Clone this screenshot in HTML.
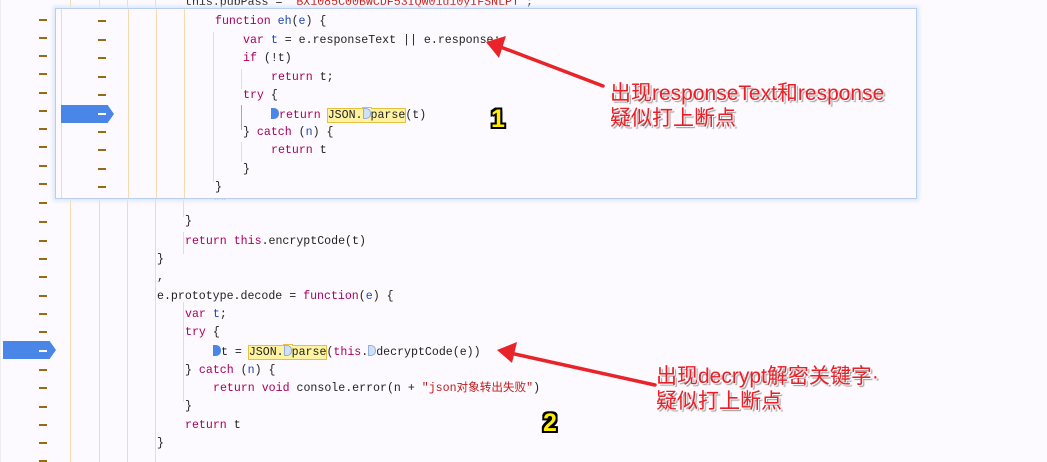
<!DOCTYPE html>
<html><head><meta charset="utf-8"><style>
body{margin:0;width:1047px;height:462px;overflow:hidden;background:#fdfaff;position:relative;font-family:"Liberation Mono","Noto Sans CJK SC",monospace;font-size:11.6px;color:#222}
.l{position:absolute;white-space:pre;line-height:14px}
.k{color:#a8005c}.b{color:#1a4aa8}.s{color:#c41a16}
.d{position:absolute;width:8px;height:1.5px;background:#9a6a10}
.v{position:absolute;width:1px;background:#fbd9b0}
.pop{position:absolute;left:55px;top:8px;width:860px;height:189px;background:#fdfaff;border:1px solid #b9cdee;box-shadow:0 0 4px 2px #dbe6f8;overflow:hidden}
.hl{background:#fff2a0;outline:1px solid #e8c040}
.bp{position:absolute;height:18px;background:#4a86e8;clip-path:polygon(0 0,88% 0,100% 50%,88% 100%,0 100%)}
.mk{display:inline-block;width:8px;height:11px;background:#4a86e8;border-radius:0 5px 5px 0;vertical-align:-1px}
.mk2{display:inline-block;width:8px;height:11px;background:#cfe0f8;border:1px solid #8fb0e0;box-sizing:border-box;border-radius:0 5px 5px 0;vertical-align:-1px}
.ann{position:absolute;color:#ee1c24;font-family:"Liberation Sans","Noto Sans CJK SC",sans-serif;font-size:21px;line-height:25px;text-shadow:1px 1px 0 #fff,2px 2px 1px #999;white-space:nowrap}
.num{position:absolute;font-family:"Liberation Sans",sans-serif;font-weight:bold;font-size:25px;color:#ffee00;text-shadow:-2px -2px 0 #000,2px -2px 0 #000,-2px 2px 0 #000,2px 2px 0 #000,0 -2px 0 #000,0 2px 0 #000,-2px 0 0 #000,2px 0 0 #000}
</style></head><body>
<div class="v" style="left:70px;top:0;height:462px"></div>
<div class="v" style="left:99px;top:0;height:462px"></div>
<div class="v" style="left:127px;top:0;height:462px"></div>
<div class="v" style="left:155px;top:0;height:462px"></div>
<div class="v" style="left:183px;top:232px;height:22px"></div>
<div class="v" style="left:183px;top:302px;height:100px"></div>
<div class="v" style="left:183px;top:197px;height:20px"></div>
<div class="v" style="left:0;top:0;height:462px;background:#eee"></div>

<div class="d" style="left:39px;top:19px"></div><div class="d" style="left:39px;top:37px"></div><div class="d" style="left:39px;top:55px"></div><div class="d" style="left:39px;top:73px"></div><div class="d" style="left:39px;top:92px"></div><div class="d" style="left:39px;top:110px"></div><div class="d" style="left:39px;top:128px"></div><div class="d" style="left:39px;top:146px"></div><div class="d" style="left:39px;top:165px"></div><div class="d" style="left:39px;top:183px"></div><div class="d" style="left:39px;top:202px"></div><div class="d" style="left:39px;top:221px"></div><div class="d" style="left:39px;top:240px"></div><div class="d" style="left:39px;top:258px"></div><div class="d" style="left:39px;top:276px"></div><div class="d" style="left:39px;top:295px"></div><div class="d" style="left:39px;top:313px"></div><div class="d" style="left:39px;top:331px"></div><div class="d" style="left:39px;top:369px"></div><div class="d" style="left:39px;top:387px"></div><div class="d" style="left:39px;top:406px"></div><div class="d" style="left:39px;top:424px"></div><div class="d" style="left:39px;top:442px"></div><div class="d" style="left:39px;top:460px"></div>
<div class="bp" style="left:3px;top:341px;width:53px"></div>
<div class="d" style="left:39px;top:350px;background:#fff"></div>

<div class="l" style="left:185px;top:-4px">this.pubPass = <span class="s">"BX1085C00BWCDF53IQW01u10yIFSNLPT"</span>;</div>
<div class="l" style="left:213px;top:196px">""</div>
<div class="l" style="left:185px;top:215px">}</div>
<div class="l" style="left:185px;top:235px"><span class="k">return</span> <span class="k">this</span>.encryptCode(t)</div>
<div class="l" style="left:157px;top:253px">}</div>
<div class="l" style="left:157px;top:271px">,</div>
<div class="l" style="left:157px;top:290px">e.prototype.decode = <span class="k">function</span>(<span class="b">e</span>) {</div>
<div class="l" style="left:185px;top:308px"><span class="k">var</span> <span class="b">t</span>;</div>
<div class="l" style="left:185px;top:326px"><span class="k">try</span> {</div>
<div class="l" style="left:213px;top:345px"><span class="mk"></span>t = <span class="hl">JSON.<span class="mk2"></span>parse</span>(<span class="k">this</span>.<span class="mk2"></span>decryptCode(e))</div>
<div class="l" style="left:185px;top:364px">} <span class="k">catch</span> (<span class="b">n</span>) {</div>
<div class="l" style="left:213px;top:382px"><span class="k">return</span> <span class="k">void</span> console.error(n + <span class="s">"json对象转出失败"</span>)</div>
<div class="l" style="left:185px;top:400px">}</div>
<div class="l" style="left:185px;top:419px"><span class="k">return</span> t</div>
<div class="l" style="left:157px;top:437px">}</div>

<div class="pop">
 <div class="v" style="left:5px;top:0;height:189px"></div>
 <div class="v" style="left:72px;top:0;height:189px"></div>
 <div class="v" style="left:100px;top:0;height:189px"></div>
 <div class="v" style="left:128px;top:0;height:189px"></div>
 <div class="v" style="left:157px;top:23px;height:150px"></div>
 <div class="v" style="left:185px;top:60px;height:20px"></div>
 <div class="v" style="left:185px;top:96px;height:25px;background:#e0a050"></div>
 <div class="v" style="left:185px;top:133px;height:20px"></div>
 <div class="bp" style="left:5px;top:96px;width:53px"></div>
 <div class="d" style="left:42px;top:11px"></div><div class="d" style="left:42px;top:30px"></div><div class="d" style="left:42px;top:48px"></div><div class="d" style="left:42px;top:67px"></div><div class="d" style="left:42px;top:85px"></div><div class="d" style="left:42px;top:104px;background:#fff"></div><div class="d" style="left:42px;top:122px"></div><div class="d" style="left:42px;top:140px"></div><div class="d" style="left:42px;top:159px"></div><div class="d" style="left:42px;top:177px"></div>
 <div class="l" style="left:159px;top:6px"><span class="k">function</span> <span class="b">eh</span>(<span class="b">e</span>) {</div>
 <div class="l" style="left:187px;top:25px"><span class="k">var</span> <span class="b">t</span> = e.responseText || e.response;</div>
 <div class="l" style="left:187px;top:43px"><span class="k">if</span> (!t)</div>
 <div class="l" style="left:215px;top:62px"><span class="k">return</span> t;</div>
 <div class="l" style="left:187px;top:80px"><span class="k">try</span> {</div>
 <div class="l" style="left:215px;top:99px"><span class="mk"></span><span class="k">return</span> <span class="hl">JSON.<span class="mk2"></span>parse</span>(t)</div>
 <div class="l" style="left:187px;top:117px">} <span class="k">catch</span> (<span class="b">n</span>) {</div>
 <div class="l" style="left:215px;top:135px"><span class="k">return</span> t</div>
 <div class="l" style="left:187px;top:154px">}</div>
 <div class="l" style="left:159px;top:172px">}</div>
</div>

<svg style="position:absolute;left:0;top:0" width="1047" height="462">
 <g stroke="#e8232a" stroke-width="3.5" fill="#e8232a" stroke-linecap="round">
  <line x1="603" y1="86" x2="498" y2="46"/>
  <polygon points="486,42 506,36 499,58" stroke="none"/>
  <line x1="655" y1="385" x2="510" y2="353"/>
  <polygon points="497,350 517,342 512,363" stroke="none"/>
 </g>
</svg>
<div class="ann" style="left:610px;top:81px">出现responseText和response<br>疑似打上断点</div>
<div class="ann" style="left:656px;top:364px">出现decrypt解密关键字·<br>疑似打上断点</div>
<div class="num" style="left:491px;top:105px">1</div>
<div class="num" style="left:543px;top:409px">2</div>
</body></html>
